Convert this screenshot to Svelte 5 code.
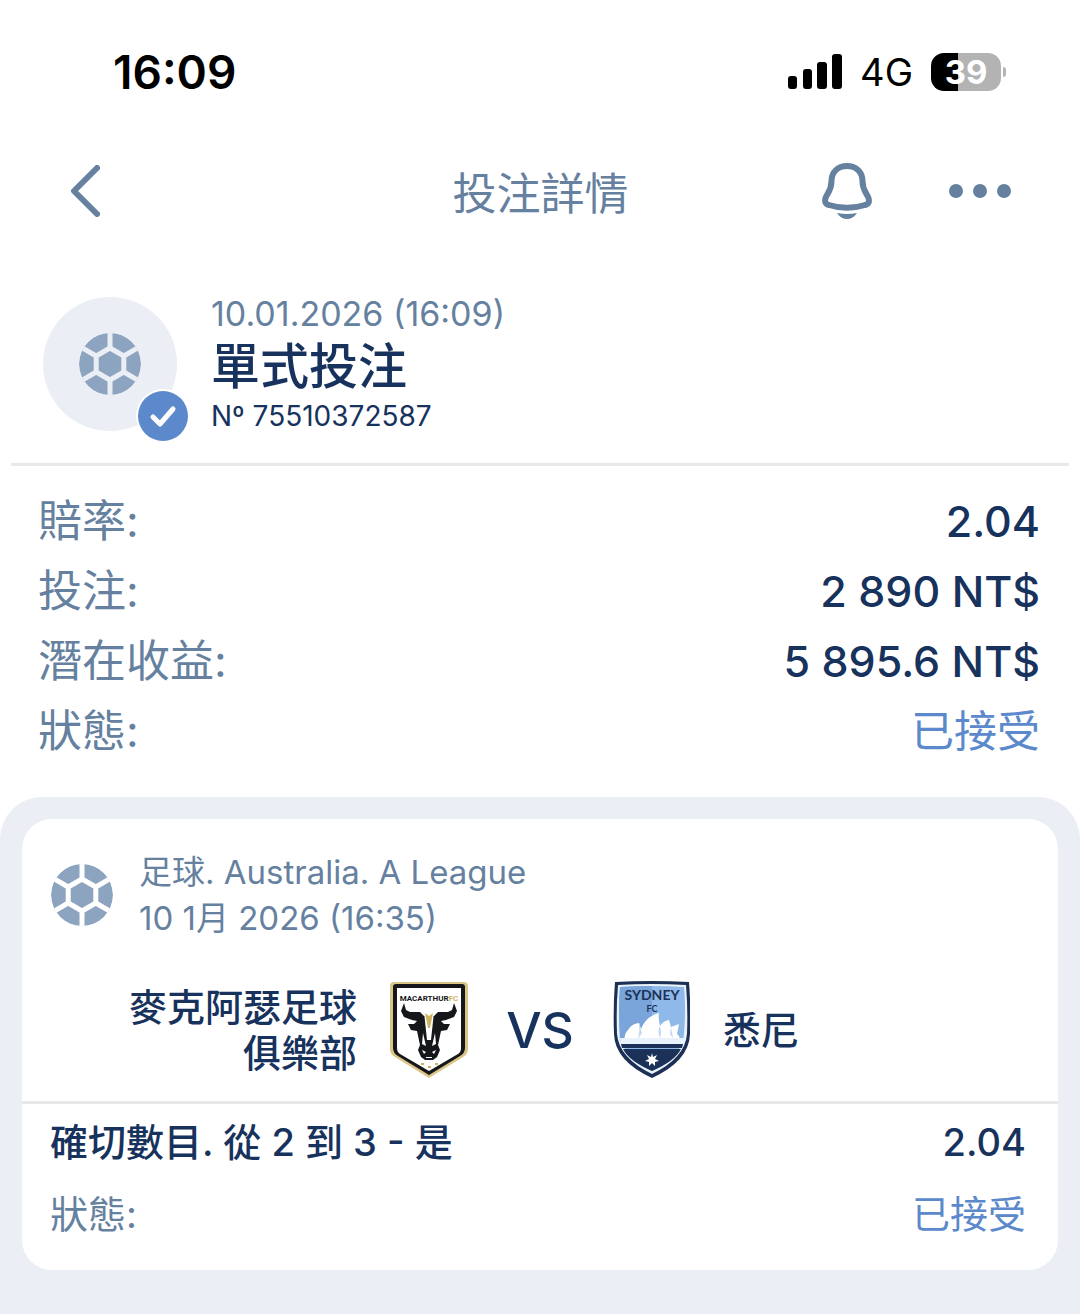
<script>
  const slip = {
    placed: '10.01.2026 (16:09)',
    type: '單式投注',
    number: 'Nº 75510372587'
  };

  const summary = [
    { label: '賠率:', value: '2.04' },
    { label: '投注:', value: '2 890 NT$' },
    { label: '潛在收益:', value: '5 895.6 NT$' },
    { label: '狀態:', value: '已接受', status: true }
  ];

  const event = {
    league: '足球. Australia. A League',
    starts: '10 1月 2026 (16:35)',
    home: '麥克阿瑟足球俱樂部',
    away: '悉尼',
    market: '確切數目. 從 2 到 3 - 是',
    odds: '2.04',
    status: '已接受'
  };
</script>

{#snippet ball()}
  <svg class="ball" viewBox="0 0 62 62" aria-hidden="true">
    <circle cx="31" cy="31" r="31" />
    <path
      class="seams"
      d="M31 15 44.800 23V39L31 47 17.200 39V23ZM31 15V-1M44.800 23 60 14.200M44.800 39 60 47.800M31 47V63M17.200 39 2 47.800M17.200 23 2 14.200"
    />
  </svg>
{/snippet}

<div class="page">
  <div class="status-bar">
    <span class="clock">16:09</span>
    <div class="indicators">
      <svg class="signal" viewBox="0 0 54 36" aria-hidden="true">
        <rect x="0" y="22" width="9" height="13" rx="3" />
        <rect x="15" y="15" width="9" height="20" rx="3" />
        <rect x="29" y="8" width="10" height="27" rx="3" />
        <rect x="44" y="0" width="10" height="35" rx="3" />
      </svg>
      <span class="network">4G</span>
      <span class="battery">39</span>
    </div>
  </div>

  <header class="nav">
    <button class="back" aria-label="返回">
      <svg width="30" height="52" viewBox="0 0 30 52">
        <path d="M27 3 4 26 27 49" />
      </svg>
    </button>
    <h1>投注詳情</h1>
    <div class="actions">
      <button aria-label="通知">
        <svg width="50" height="58" viewBox="0 0 50 58">
          <path
            d="M25 4C16 4 9.500 10 9.500 19C9.500 29 5 31 3.500 36C2.500 40 3 42 7 43C18 46.500 32 46.500 43 43C47 42 47.500 40 46.500 36C45 31 40.500 29 40.500 19C40.500 10 34 4 25 4Z"
          />
          <path class="clapper" d="M15 51Q25 53 35 51Q31 57 25 57T15 51Z" />
        </svg>
      </button>
      <button aria-label="更多">
        <svg class="dots" width="62" height="14" viewBox="0 0 62 14">
          <circle cx="7" cy="7" r="7" />
          <circle cx="31" cy="7" r="7" />
          <circle cx="55" cy="7" r="7" />
        </svg>
      </button>
    </div>
  </header>

  <section class="slip">
    <div class="avatar">
      {@render ball()}
      <svg class="badge" viewBox="0 0 54 54" aria-hidden="true">
        <circle cx="27" cy="27" r="27" fill="#fff" />
        <circle cx="27" cy="27" r="25" fill="#5b89cc" />
        <path d="M17 28 24 35 37 20" />
      </svg>
    </div>
    <div class="slip-text">
      <span class="placed">{slip.placed}</span>
      <h2>{slip.type}</h2>
      <span class="number">{slip.number}</span>
    </div>
  </section>

  <dl class="summary">
    {#each summary as row}
      <div class="row">
        <dt>{row.label}</dt>
        <dd class:status={row.status}>{row.value}</dd>
      </div>
    {/each}
  </dl>

  <main class="events">
    <article class="card">
      <div class="league">
        {@render ball()}
        <p>{event.league}<br />{event.starts}</p>
      </div>

      <div class="match">
        <span class="team home">{event.home}</span>
        <div class="versus">
          <svg class="crest" viewBox="0 0 78 98" role="img" aria-label="Macarthur FC">
            <path d="M4 1H74Q78 1 78 5V68Q78 73 73 76L39 97 5 76Q0 73 0 68V5Q0 1 4 1Z" fill="#dac587" />
            <path d="M6 3H72Q75 3 75 6V67Q75 72 70 75L39 94 8 75Q3 72 3 67V6Q3 3 6 3Z" fill="#15171a" />
            <path d="M7 7H71V67Q71 71 68 73L39 90 10 73Q7 71 7 67Z" fill="#fff" />
            <text x="39" y="20" class="crest-name">MACARTHUR<tspan class="gold">FC</tspan></text>
            <path
              d="M14 22 11 30 14 36 22 39 27 40 24 43H18L21 49 27 50 30 64 28 69 31 76 35 79H43L47 76 50 69 48 64 51 50 57 49 60 43H54L51 40 56 39 64 36 67 30 64 22 62 29 58 31H48L44 35H34L30 31H20L16 29Z"
              fill="#15171a"
            />
            <path d="M34 31H44L41 59H37Z" fill="#fff" />
            <path d="M35 32 39 35 43 32 40 47H38Z" class="gold" />
            <path d="M33 52 36 65 32 63ZM45 52 42 65 46 63Z" fill="#fff" />
            <path d="M32 69 36 71 34 73ZM46 69 42 71 44 73ZM36 76H42V77H36Z" fill="#fff" />
            <path d="M31 82H34V84H31ZM38 85H41V87H38ZM45 82H48V84H45Z" class="gold" />
          </svg>
          <span class="vs">VS</span>
          <svg class="crest" viewBox="0 0 78 98" role="img" aria-label="Sydney FC">
            <path d="M3 1Q39 -1 77 1Q79 26 78 53Q77 80 40 97Q3 80 2 53Q1 26 3 1Z" fill="#1c2f55" />
            <path d="M6 4Q39 2 74 4Q76 27 75 53Q73 77 40 93Q7 77 5 53Q4 27 6 4Z" fill="#e9f1fa" />
            <path d="M8 6Q39 4 72 6Q74 27 72 53Q70 76 40 90Q10 76 8 53Q6 27 8 6Z" fill="#8fb9e8" />
            <path d="M8 6Q24 5 40 5V60H8Q6 27 8 6Z" fill="#79a5da" />
            <path
              d="M12 60Q13 51 16 49Q19 43 27 42L29 48Q34 35 47 32Q46 38 48 45Q51 40 57 39L59 46 67 43 65 53Q68 55 68 60Z"
              fill="#fff"
            />
            <path d="M27 42 30 52 26 58Q28 50 27 42ZM48 45Q50 51 48 57Q45 50 48 45ZM59 46 61 57 58 53Z" fill="#c4d9f1" />
            <path d="M8 57H72L71 65H9Z" fill="#e9f1fa" />
            <path d="M9 63H71L70 67H10ZM11 68H69Q63 80 40 90Q17 80 11 68Z" fill="#1c3158" />
            <path d="M40 72 41 76 45 74 43 78 47 80 43 81 43 85 40 82 37 85 37 81 33 80 37 78 35 74 39 76Z" fill="#fff" />
            <text x="40" y="19" class="crest-sydney">SYDNEY</text>
            <text x="40" y="31" class="crest-fc">FC</text>
          </svg>
        </div>
        <span class="team">{event.away}</span>
      </div>

      <div class="bet">
        <div class="row market">
          <span>{event.market}</span>
          <span>{event.odds}</span>
        </div>
        <div class="row">
          <span>狀態:</span>
          <span class="status">{event.status}</span>
        </div>
      </div>
    </article>
  </main>
</div>

<style>
  :global(body) {
    margin: 0;
    background: #ebeef4;
  }

  .page {
    --navy: #17325c;
    --slate: #65819f;
    --blue: #5b89cc;
    --panel: #ebeef4;
    --seam: #fff;
    background: #fff;
    color: var(--navy);
    font-family: Inter, 'Noto Sans CJK TC', sans-serif;
    font-size: 44px;
  }

  h1,
  h2,
  p,
  dl,
  dd {
    margin: 0;
    font-weight: 400;
  }

  .status-bar {
    display: flex;
    justify-content: space-between;
    align-items: center;
    padding: 44px 79px 0 113px;
    height: 56px;
    color: #000;
  }

  .clock {
    font-size: 46px;
    font-weight: 600;
  }

  .indicators {
    display: flex;
    align-items: center;
    gap: 18px;
  }

  .signal {
    width: 54px;
    height: 36px;
  }

  .network {
    font-size: 38px;
  }

  .battery {
    position: relative;
    width: 70px;
    height: 38px;
    border-radius: 13px;
    background: linear-gradient(90deg, #000 39%, #b3b3b3 39%);
    color: #fff;
    font-size: 33px;
    font-weight: 700;
    line-height: 38px;
    text-align: center;
  }

  .battery::after {
    content: '';
    position: absolute;
    top: 14px;
    right: -5px;
    width: 3px;
    height: 10px;
    border-radius: 0 4px 4px 0;
    background: #b3b3b3;
  }

  .nav {
    display: grid;
    grid-template-columns: 1fr auto 1fr;
    align-items: center;
    padding: 0 69px 0 70px;
    height: 182px;
    color: var(--slate);
  }

  .nav h1 {
    font-size: 44px;
  }

  .nav button {
    display: flex;
    padding: 0;
    border: 0;
    background: none;
    color: inherit;
  }

  .nav svg {
    fill: none;
    stroke: currentColor;
    stroke-width: 6;
    stroke-linecap: round;
    stroke-linejoin: round;
  }

  .nav .dots,
  .nav .clapper {
    fill: currentColor;
    stroke: none;
  }

  .actions {
    display: flex;
    justify-content: flex-end;
    align-items: center;
    gap: 77px;
  }

  .ball {
    flex: none;
    width: 62px;
    height: 62px;
    border-radius: 50%;
    fill: #8ca4bf;
  }

  .seams {
    fill: none;
    stroke: var(--seam);
    stroke-width: 5;
  }

  .slip {
    display: flex;
    align-items: center;
    gap: 34px;
    margin: 0 11px;
    padding: 8px 32px 26px;
    border-bottom: 3px solid #e7e8ea;
  }

  .avatar {
    --seam: var(--panel);
    position: relative;
    display: grid;
    place-items: center;
    width: 134px;
    height: 134px;
    border-radius: 50%;
    background: var(--panel);
  }

  .badge {
    position: absolute;
    right: -13px;
    bottom: -12px;
    width: 54px;
    height: 54px;
  }

  .badge path {
    fill: none;
    stroke: #fff;
    stroke-width: 5;
    stroke-linecap: round;
    stroke-linejoin: round;
  }

  .slip-text {
    display: flex;
    flex-direction: column;
  }

  .placed {
    color: var(--slate);
    font-size: 34px;
    line-height: 48px;
  }

  .slip h2 {
    font-size: 49px;
    font-weight: 500;
    line-height: 57px;
  }

  .number {
    font-size: 28px;
    line-height: 42px;
  }

  .summary {
    padding: 20px 40px 31px 38px;
  }

  .row {
    display: flex;
    justify-content: space-between;
    align-items: center;
    color: var(--slate);
    line-height: 70px;
  }

  .summary dd {
    color: var(--navy);
    font-size: 43px;
    font-weight: 500;
  }

  .summary .status,
  .status {
    color: var(--blue);
    font-weight: 400;
  }

  .events {
    padding: 22px 22px 44px;
    border-radius: 42px 42px 0 0;
    background: var(--panel);
  }

  .card {
    border-radius: 30px;
    background: #fff;
    font-size: 38px;
  }

  .league {
    display: flex;
    align-items: center;
    gap: 26px;
    padding: 30px 29px 0;
    color: var(--slate);
    font-size: 33px;
    line-height: 46px;
  }

  .match {
    display: grid;
    grid-template-columns: 1fr auto 1fr;
    align-items: center;
    gap: 33px;
    padding: 40px 28px 22px;
    border-bottom: 3px solid #e7e8ea;
    font-weight: 500;
    line-height: 46px;
  }

  .home {
    justify-self: end;
    max-width: 240px;
    text-align: right;
  }

  .versus {
    display: flex;
    align-items: center;
    gap: 38px;
  }

  .crest {
    width: 78px;
    height: 98px;
  }

  .crest text {
    font-weight: 700;
    text-anchor: middle;
  }

  .crest-name {
    fill: #15171a;
    font-family: Roboto, sans-serif;
    font-size: 8px;
  }

  .gold {
    fill: #d0b464;
  }

  .crest-sydney,
  .crest-fc {
    fill: #1c3158;
    font-family: Lato, sans-serif;
    font-size: 14px;
  }

  .crest-fc {
    font-size: 9px;
  }

  .vs {
    font-size: 50px;
  }

  .bet {
    padding: 2px 32px 20px 28px;
  }

  .bet .row {
    line-height: 72px;
  }

  .bet .market {
    color: var(--navy);
    font-weight: 500;
  }
</style>
